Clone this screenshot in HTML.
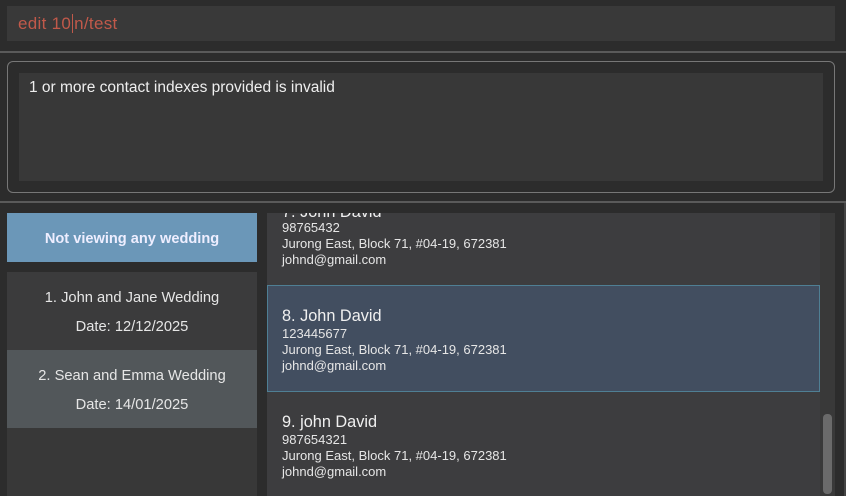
<!DOCTYPE html>
<html><head><style>
*{margin:0;padding:0;box-sizing:border-box}
body{width:846px;height:496px;background:#2c2c2c;font-family:"Liberation Sans",sans-serif;position:relative;overflow:hidden;color:#fff}
.a{position:absolute;white-space:nowrap}
.sm{font-size:13px;color:#e6e6e6;line-height:16px}
.nm{font-size:16.3px;color:#f0f0f0;line-height:18px}
</style></head><body>
<div class="a" style="left:7px;top:6px;width:828px;height:35px;background:#393939"></div>
<div class="a" style="left:18px;top:14px;font-size:17px;color:#c1594a;line-height:20px;letter-spacing:0.3px">edit 10<span style="border-left:1px solid #c1594a;margin:0 1px"></span>n/test</div>
<div class="a" style="left:0;top:51px;width:846px;height:2px;background:#5a5a5a"></div>
<div class="a" style="left:7px;top:61px;width:828px;height:132px;border:1px solid #777;border-radius:6px"></div>
<div class="a" style="left:19px;top:73px;width:804px;height:108px;background:#383838"></div>
<div class="a" style="left:29px;top:79px;font-size:15.5px;color:#eee;line-height:17px">1 or more contact indexes provided is invalid</div>
<div class="a" style="left:0;top:201px;width:846px;height:2px;background:#5a5a5a"></div>
<div class="a" style="left:844px;top:203px;width:2px;height:293px;background:#444"></div>
<div class="a" style="left:7px;top:213px;width:250px;height:49px;background:#6b97b8;font-weight:bold;font-size:14.6px;text-align:center;line-height:52px;color:#eef">Not viewing any wedding</div>
<div class="a" style="left:7px;top:272px;width:250px;height:224px;background:#383838"></div>
<div class="a" style="left:7px;top:272px;width:250px;height:78px;background:#3b3b3c;text-align:center;font-size:14.7px;color:#e6e6e6"><div style="margin-top:18px">1. John and Jane Wedding</div><div style="margin-top:13px">Date: 12/12/2025</div></div>
<div class="a" style="left:7px;top:350px;width:250px;height:78px;background:#52575a;text-align:center;font-size:14.7px;color:#e6e6e6"><div style="margin-top:18px">2. Sean and Emma Wedding</div><div style="margin-top:13px">Date: 14/01/2025</div></div>
<div class="a" style="left:267px;top:213px;width:553px;height:283px;background:#3d3d3f;overflow:hidden">
 <div class="a nm" style="left:15px;top:-10px">7. John David</div>
 <div class="a sm" style="left:15px;top:7px">98765432</div>
 <div class="a sm" style="left:15px;top:23px">Jurong East, Block 71, #04-19, 672381</div>
 <div class="a sm" style="left:15px;top:39px">johnd@gmail.com</div>
 <div class="a" style="left:0;top:72px;width:553px;height:107px;background:#424e60;border:1px solid #4f7f94"></div>
 <div class="a nm" style="left:15px;top:94px">8. John David</div>
 <div class="a sm" style="left:15px;top:113px">123445677</div>
 <div class="a sm" style="left:15px;top:129px">Jurong East, Block 71, #04-19, 672381</div>
 <div class="a sm" style="left:15px;top:145px">johnd@gmail.com</div>
 <div class="a nm" style="left:15px;top:200px">9. john David</div>
 <div class="a sm" style="left:15px;top:219px">987654321</div>
 <div class="a sm" style="left:15px;top:235px">Jurong East, Block 71, #04-19, 672381</div>
 <div class="a sm" style="left:15px;top:251px">johnd@gmail.com</div>
</div>
<div class="a" style="left:820px;top:213px;width:15px;height:283px;background:#393939"></div>
<div class="a" style="left:823px;top:414px;width:9px;height:80px;background:#6a6a6a;border-radius:4px"></div>
</body></html>
